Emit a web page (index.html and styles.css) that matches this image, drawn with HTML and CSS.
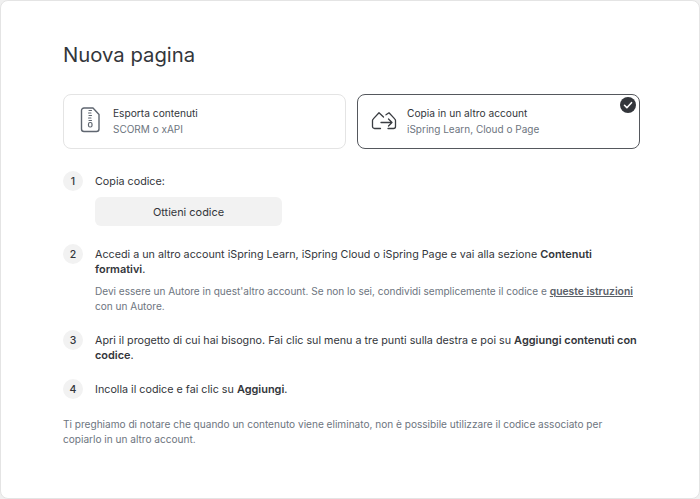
FILE: index.html
```html
<!DOCTYPE html>
<html lang="it">
<head>
<meta charset="utf-8">
<title>Nuova pagina</title>
<link rel="stylesheet" href="styles.css">
</head>
<body>
<main class="dialog">
  <h1 class="title">Nuova pagina</h1>
  <div class="cards">
    <div class="card">
      <svg class="card-icon" width="26" height="28" viewBox="0 0 26 28" fill="none" stroke="#5f6670" stroke-width="1.4" stroke-linecap="round" stroke-linejoin="round">
        <path d="M7 1h9l6 6.500V22a2.500 2.500 0 0 1-2.500 2.500H7A2.500 2.500 0 0 1 4.500 22V3.500A2.500 2.500 0 0 1 7 1z"/>
        <path d="M12 3.500h2.500M11.500 6H14M12 8.500h2.500M11.500 11H14M12 13.500h2.500" stroke-width="1.100"/>
        <rect x="11.500" y="15.500" width="3.500" height="4.500" rx="1.500" stroke-width="1.200"/>
      </svg>
      <div class="card-text">
        <div class="card-title">Esporta contenuti</div>
        <div class="card-sub">SCORM o xAPI</div>
      </div>
    </div>
    <div class="card card-active">
      <svg class="card-icon" width="26" height="20" viewBox="0 0 26 20" fill="none" stroke="#3a3d42" stroke-width="1.300" stroke-linecap="round" stroke-linejoin="round">
        <path d="M9.500 17.500H3.500a2 2 0 0 1-2-2v-6c0-.6.300-1.200.8-1.600L8 1.800l4.500 4.200"/>
        <path d="M15 3.800l3-2 5.700 6.100c.5.400.8 1 .8 1.600v6a2 2 0 0 1-2 2H17"/>
        <path d="M10 11.500h11M17.500 8l3.500 3.500-3.500 3.500"/>
      </svg>
      <div class="card-text">
        <div class="card-title">Copia in un altro account</div>
        <div class="card-sub">iSpring Learn, Cloud o Page</div>
      </div>
      <svg class="check" width="16" height="16" viewBox="0 0 16 16">
        <circle cx="8" cy="8" r="8" fill="#33363b"/>
        <path d="M4.500 8.300l2.400 2.400 4.600-5" fill="none" stroke="#fff" stroke-width="1.600" stroke-linecap="round" stroke-linejoin="round"/>
      </svg>
    </div>
  </div>
  <ol class="steps">
    <li class="step">
      <span class="num">1</span>
      <div class="step-body step-body-action">
        <p class="step-text">Copia codice:</p>
        <button class="btn" type="button">Ottieni codice</button>
      </div>
    </li>
    <li class="step">
      <span class="num">2</span>
      <div class="step-body">
        <p class="step-text">Accedi a un altro account iSpring Learn, iSpring Cloud o iSpring Page e vai alla sezione <b>Contenuti formativi</b>.</p>
        <p class="note">Devi essere un Autore in quest'altro account. Se non lo sei, condividi semplicemente il codice e <a class="link" href="#">queste istruzioni</a> con un Autore.</p>
      </div>
    </li>
    <li class="step">
      <span class="num">3</span>
      <div class="step-body">
        <p class="step-text">Apri il progetto di cui hai bisogno. Fai clic sul menu a tre punti sulla destra e poi su <b>Aggiungi contenuti con codice</b>.</p>
      </div>
    </li>
    <li class="step">
      <span class="num">4</span>
      <div class="step-body">
        <p class="step-text">Incolla il codice e fai clic su <b>Aggiungi</b>.</p>
      </div>
    </li>
  </ol>
  <p class="footer">Ti preghiamo di notare che quando un contenuto viene eliminato, non è possibile utilizzare il codice associato per copiarlo in un altro account.</p>
</main>
</body>
</html>
```
FILE: styles.css
```css
* { box-sizing: border-box; }
html, body { margin: 0; height: 100%; background: #f0f0f0; }
body { font-family: Inter, "Liberation Sans", sans-serif; color: #33363b; }
.dialog {
  width: 700px;
  height: 499px;
  background: #fff;
  border: 1px solid #e4e4e4;
  border-radius: 8px;
  padding: 41px 59px 0 62px;
}
.title { margin: 0 0 27px; font-size: 20.300px; line-height: 25px; font-weight: 400; letter-spacing: 0; }
.cards { display: grid; grid-template-columns: 283px 283px; gap: 11px; margin-bottom: 22px; }
.card {
  position: relative;
  display: flex;
  align-items: center;
  gap: 10px;
  height: 55px;
  padding: 0 13px 2px;
  border: 1px solid #e4e4e4;
  border-radius: 8px;
}
.card-active { border: 1.500px solid #55585d; }
.card-text { font-size: 10.200px; line-height: 16px; }
.card-title { color: #33363b; }
.card-sub { color: #6d7580; font-size: 10px; }
.check { position: absolute; top: 2px; right: 3px; }
.steps { list-style: none; margin: 0 0 18px; padding: 0; }
.step { display: flex; gap: 12px; margin-bottom: 16px; }
.num {
  flex: none;
  display: flex;
  align-items: center;
  justify-content: center;
  width: 20px;
  height: 20px;
  border-radius: 50%;
  background: #f2f2f2;
  font-size: 10.500px;
  font-weight: 500;
}
.step-body { flex: 1; padding-top: 3px; }
.step-body-action { padding-bottom: 2px; }
.step-text { margin: 0; font-size: 10.750px; line-height: 15px; }
.step-text b { font-weight: 600; font-size: 10.950px; }
.btn {
  display: block;
  width: 187px;
  height: 29px;
  margin-top: 8px;
  border: 0;
  border-radius: 6px;
  background: #f2f2f2;
  color: #33363b;
  font: 400 10.950px Inter, "Liberation Sans", sans-serif;
}
.note { margin: 7px 0 0; font-size: 10.050px; line-height: 15px; color: #6d7580; }
.link { color: #5a6068; font-weight: 600; font-size: 10.350px; }
.footer { margin: 0; max-width: 560px; font-size: 10.090px; line-height: 15px; color: #6d7580; }
```
